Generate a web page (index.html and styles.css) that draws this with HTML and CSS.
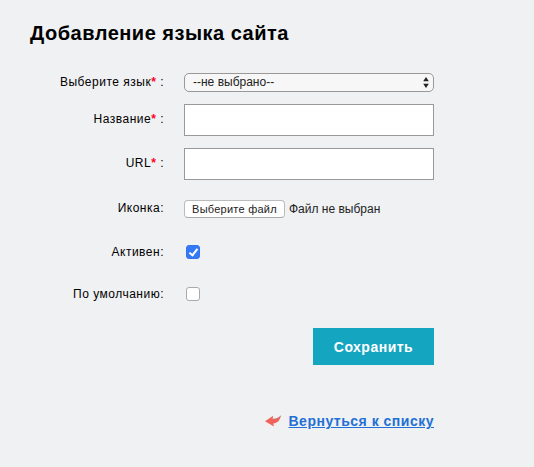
FILE: index.html
```html
<!DOCTYPE html>
<html lang="ru">

<head>
    <meta charset="UTF-8">
    <meta name="viewport" content="width=device-width, initial-scale=1.0">
    <title>Добавление языка сайта</title>
    <link rel="stylesheet" href="styles.css">
</head>

<body>

    <h1>Добавление языка сайта</h1>

    <form class="lang-form">
        <div class="row row-select">
            <label for="lang">Выберите язык<span class="required">*</span> :</label>
            <div class="select-box">
                <select id="lang">
                    <option>--не выбрано--</option>
                </select>
                <svg class="arrows" width="6" height="11" viewBox="0 0 6 11">
                    <path d="M3 0 L5.8 4.3 H0.2 Z M3 11 L5.8 6.7 H0.2 Z" fill="#222" />
                </svg>
            </div>
        </div>

        <div class="row row-text">
            <label for="name">Название<span class="required">*</span> :</label>
            <input type="text" id="name">
        </div>

        <div class="row row-text">
            <label for="url">URL<span class="required">*</span> :</label>
            <input type="text" id="url">
        </div>

        <div class="row row-file">
            <label>Иконка:</label>
            <div class="file">
                <button type="button" class="file-button">Выберите файл</button>
                <span class="file-name">Файл не выбран</span>
            </div>
        </div>

        <div class="row row-check">
            <label for="active">Активен:</label>
            <input type="checkbox" id="active" checked>
        </div>

        <div class="row row-check">
            <label for="default">По умолчанию:</label>
            <input type="checkbox" id="default">
        </div>

        <button type="submit" class="save">Сохранить</button>
    </form>

    <div class="back">
        <svg width="16" height="12" viewBox="0 0 16 12">
            <path d="M0 6.2 L8.2 0.8 L7.6 3.9 C11 4.3 13.5 3.2 15.8 0.8 C15 5.4 12.5 8.2 8.2 8.5 L9 11.5 Z" fill="#f0625a" />
            <path d="M7.6 3.9 C11 4.3 13.5 3.2 15.8 0.8" fill="none" stroke="#a08080" stroke-width="0.6" />
        </svg>
        <a href="#">Вернуться к списку</a>
    </div>

</body>

</html>
```
FILE: styles.css
```css
body {
    font-family: "Liberation Sans", Arial, sans-serif;
    font-size: 12px;
    letter-spacing: 0.5px;
    margin: 0;
    padding: 21px 100px 0 30px;
    background-color: #f0f1f3;
    color: #000;
}

h1 {
    margin: 0 0 28px;
    font-size: 20px;
    line-height: 24px;
    white-space: nowrap;
}

.row {
    display: grid;
    grid-template-columns: 134px 250px;
    column-gap: 20px;
    align-items: center;
}

label {
    text-align: right;
    line-height: 16px;
    padding-bottom: 2px;
}

.required {
    color: #ff0020;
    font-weight: bold;
}

input,
select,
button {
    margin: 0;
    box-sizing: border-box;
    font-family: inherit;
    appearance: none;
}

.row-select {
    height: 19px;
    margin-bottom: 12px;
}

.select-box {
    display: grid;
    align-items: center;
}

.select-box > * {
    grid-area: 1 / 1;
}

select {
    width: 250px;
    height: 19px;
    padding: 0 8px 1px;
    border: 1px solid #999;
    border-radius: 5px;
    background-color: #f7f7f7;
    color: #222;
    font-size: 12px;
}

.arrows {
    justify-self: end;
    margin-right: 5px;
    pointer-events: none;
}

.row-text {
    height: 32px;
    margin-bottom: 12px;
}

input[type="text"] {
    width: 250px;
    height: 32px;
    border: 1px solid #999;
    background-color: #fff;
}

.row-file {
    height: 18px;
    margin: 20px 0 27px;
}

.file {
    display: flex;
    align-items: center;
    gap: 4px;
}

.file-button {
    width: 101px;
    height: 18px;
    padding: 0;
    border: 1px solid #bbb;
    border-bottom-color: #aaa;
    border-radius: 4px;
    background-color: #fff;
    color: #222;
    font-size: 11px;
    letter-spacing: 0.25px;
    white-space: nowrap;
}

.file-name {
    letter-spacing: 0;
    color: #222;
}

.row-check {
    height: 14px;
    margin-bottom: 28px;
}

.row-check label {
    padding-bottom: 0;
}

input[type="checkbox"] {
    width: 14px;
    height: 14px;
    margin-left: 2px;
    border: 1px solid #aaa;
    border-radius: 3px;
    background-color: #fff;
}

input[type="checkbox"]:checked {
    display: grid;
    place-items: center;
    border-color: #2f75f0;
    background-color: #3478f6;
}

input[type="checkbox"]:checked::before {
    content: "";
    width: 3px;
    height: 7px;
    margin-bottom: 2px;
    border: solid #fff;
    border-width: 0 2px 2px 0;
    transform: rotate(38deg);
}

.row-file,
.row-check {
    align-content: center;
}

.save {
    display: block;
    width: 121px;
    height: 37px;
    margin: -1px 0 0 auto;
    padding: 1px 0 0;
    border: 0;
    background-color: #14a5c0;
    color: #fff;
    font-size: 14px;
    font-weight: bold;
    letter-spacing: 0.5px;
}

.back {
    display: flex;
    justify-content: flex-end;
    align-items: center;
    gap: 8px;
    margin-top: 48px;
    font-size: 14px;
    font-weight: bold;
    line-height: 16px;
}

.back a {
    color: #2270d4;
}
```
